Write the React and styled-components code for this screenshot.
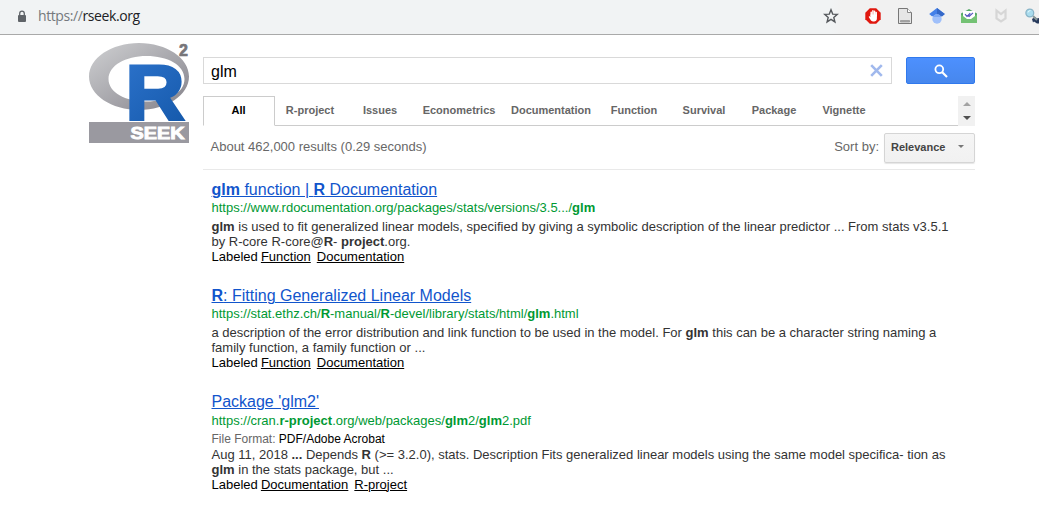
import React from "react";
import styled, { createGlobalStyle } from "styled-components";

const Global = createGlobalStyle`
  * { box-sizing: border-box; }
  body { margin: 0; background: #fff; overflow: hidden; font-family: "Liberation Sans", Arial, sans-serif; }
`;

const Toolbar = styled.header`
  display: flex;
  align-items: center;
  height: 35px;
  padding-left: 17px;
  padding-bottom: 2px;
  background: linear-gradient(90deg, #f1f3f4 80%, #f1f1f1 81%);
  border-bottom: 1px solid #a9a9a9;
  overflow: hidden;
  > svg { flex: none; }
`;

const Address = styled.div`
  flex: none;
  width: 785px;
  margin-left: 11px;
  font: 14px/18px "Open Sans", "Noto Sans", sans-serif;
  letter-spacing: -0.41px;
  color: #202124;
  span { color: #75797d; }
`;

const Extensions = styled.div`
  display: flex;
  flex: none;
  align-items: center;
  gap: 16px;
  svg { flex: none; display: block; }
  svg:first-child { margin-right: 10px; }
`;

const Page = styled.main`
  display: flex;
  padding: 8px 0 0 89px;
`;

const LogoLink = styled.div`
  width: 114px;
  flex: none;
  svg { display: block; overflow: visible; }
`;

const Content = styled.div`
  width: 772px;
  padding-top: 14px;
`;

const SearchRow = styled.form`
  display: flex;
  gap: 14px;
`;

const SearchField = styled.div`
  display: flex;
  align-items: center;
  justify-content: space-between;
  width: 689px;
  height: 27px;
  padding: 0 8px 0 7px;
  border: 1px solid #d9d9d9;
  font-size: 16px;
  color: #000;
  span { padding-top: 2px; }
`;

const SearchButton = styled.button`
  display: flex;
  align-items: center;
  justify-content: center;
  width: 69px;
  height: 27px;
  padding: 0;
  border: 1px solid #3079ed;
  border-radius: 2px;
  background: linear-gradient(#4d90fe, #4787ed);
`;

const TabBar = styled.nav`
  display: flex;
  height: 30px;
  margin-top: 12px;
  border-bottom: 1px solid #ccc;
`;

const Tab = styled.div`
  width: ${(p) => p.$width}px;
  height: 30px;
  padding: ${(p) => (p.$active ? "7px 1px 0 0" : "8px 0 0")};
  border: ${(p) => (p.$active ? "1px solid #ccc" : "0")};
  border-bottom: ${(p) => (p.$active ? "1px solid #fff" : "0")};
  text-align: center;
  font-weight: bold;
  font-size: 11px;
  line-height: 13px;
  color: ${(p) => (p.$active ? "#000" : "#666")};
`;

const TabScroller = styled.div`
  display: flex;
  flex-direction: column;
  align-items: center;
  justify-content: space-between;
  width: 17px;
  height: 30px;
  margin-left: auto;
  padding: 6px 0;
  background: #f1f1f1;
`;

const Summary = styled.div`
  display: flex;
  align-items: center;
  height: 44px;
  padding-left: 7.5px;
  border-bottom: 1px solid #e9e9e9;
  font-size: 13px;
  color: #676767;
`;

const ResultCount = styled.span`
  flex: 1;
  padding-bottom: 2px;
`;

const SortLabel = styled.span`
  margin-right: 5px;
  padding-bottom: 2px;
`;

const SortSelect = styled.div`
  display: flex;
  align-items: center;
  justify-content: space-between;
  width: 91px;
  height: 30px;
  padding: 0 10px 2px 6px;
  border: 1px solid #d5d5d5;
  border-radius: 2px;
  background: linear-gradient(#f5f5f5, #f1f1f1);
  box-shadow: 0 1px 1px rgba(0, 0, 0, 0.1);
  font-weight: bold;
  font-size: 11px;
  color: #444;
`;

const Result = styled.article`
  height: 106px;
  padding-left: 8.5px;
  white-space: nowrap;
  &:first-of-type { margin-top: 10px; }
`;

const Title = styled.h2`
  margin: 0;
  font-weight: normal;
  font-size: 16px;
  line-height: 20px;
  text-decoration: underline;
  text-decoration-thickness: 1px;
  color: #15c;
`;

const Line = styled.div`
  font-size: 13px;
  line-height: 15px;
  color: ${(p) => p.$color || "#333"};
`;

const Url = styled(Line)`
  line-height: 16px;
  margin-bottom: 3px;
  padding-top: ${(p) => (p.$lowered ? 1 : 0)}px;
  color: #093;
`;

const Format = styled(Line)`
  margin-top: -1px;
  font-size: 12px;
  line-height: 16px;
  span { color: #666; }
`;

const LabelLine = styled(Line)`
  word-spacing: -0.5px;
`;

const Label = styled.span`
  margin-right: 6px;
  text-decoration: underline;
  text-decoration-thickness: 1px;
`;

const tabs = [
  ["All", 72], ["R-project", 70], ["Issues", 70], ["Econometrics", 88], ["Documentation", 96],
  ["Function", 70], ["Survival", 70], ["Package", 70], ["Vignette", 70],
];

const Lock = () => (
  <svg width="10" height="13" viewBox="0 0 10 13">
    <rect x="1" y="5" width="8" height="7" rx="1" fill="#5f6368" />
    <path d="M2.7 5V3.5a2.3 2.3 0 0 1 4.6 0V5" fill="none" stroke="#5f6368" strokeWidth="1.3" />
  </svg>
);

const Star = () => (
  <svg width="16" height="16" viewBox="0 0 16 16">
    <path d="M8 1.8l1.7 4.3 4.6.3-3.5 3 1.1 4.5L8 11.4l-3.9 2.5 1.1-4.5-3.5-3 4.6-.3z" fill="none" stroke="#55585c" strokeWidth="1.4" />
  </svg>
);

const Blocker = () => (
  <svg width="16" height="16" viewBox="0 0 16 16">
    <path d="M4.8.3h6.4l4.5 4.5v6.4l-4.5 4.5H4.8L.3 11.2V4.8z" fill="#e0180f" />
    <path d="M6.200 8V4.300M7.900 7.500V2.800M9.600 7.500V3.200M11.200 8V4.500" stroke="#fff" strokeWidth="1.500" strokeLinecap="round" />
    <path d="M5.500 6.500h6.400v4.200c0 1.500-1.200 2.800-2.800 2.800H8c-1 0-1.700-.5-2.200-1.200L3.900 9.300c-.5-.8.7-1.500 1.600-.4z" fill="#fff" />
  </svg>
);

const PageIcon = () => (
  <svg width="16" height="16" viewBox="0 0 16 16">
    <path d="M1.500.5h9l4 4v11h-13z" fill="#e6e6e6" stroke="#777" />
    <path d="M10.500.5v4h4" fill="#fff" stroke="#888" />
    <path d="M3.500 12.500h9v1.500h-9z" fill="#aaa" stroke="#888" strokeWidth=".6" />
  </svg>
);

const Scholar = () => (
  <svg width="16" height="16" viewBox="0 0 16 16">
    <path d="M8 0l7.800 6.100-2.600 2.100H2.800L.2 6.100z" fill="#4480e8" />
    <path d="M8 0l7.800 6.100-2.600 2.100H8z" fill="#3468c8" />
    <circle cx="8" cy="11" r="4.700" fill="#a0c0fa" />
    <path d="M3.800 9a4.800 4.800 0 0 1 8.400 0z" fill="#7ca8f4" />
  </svg>
);

const MailCheck = () => (
  <svg width="16" height="16" viewBox="0 0 16 16">
    <path d="M0 5.500L8 1l8 4.500V14q0 1-1 1H1q-1 0-1-1z" fill="#55a968" />
    <path d="M2 3h12v7l-6 3-6-3z" fill="#fff" />
    <path d="M0 6.500l6 4.500h4l6-4.500V14q0 1-1 1H1q-1 0-1-1z" fill="#74c274" />
    <path d="M4 6.200l2 2.200 3.300-3.200M7.300 7.800l.8.7L12 4.900" fill="none" stroke="#5655bd" strokeWidth="1.200" />
  </svg>
);

const Shield = () => (
  <svg width="16" height="16" viewBox="0 0 16 16">
    <path d="M3.500 10.500V2.500L8 6l4.500-3.500v8L8 13.500z" fill="none" stroke="#d6d6d6" strokeWidth="2.200" />
  </svg>
);

const Lens = () => (
  <svg width="16" height="16" viewBox="0 0 16 16">
    <path d="M7 11l3-2 2 1.500 4-1v6h-4l-3-2-1 1z" fill="#27395c" />
    <path d="M8 8l4 4" stroke="#899" strokeWidth="2" />
    <circle cx="4.800" cy="5" r="3.900" fill="#a9dcee" stroke="#8ab5c8" strokeWidth="1.300" />
    <path d="M3 4.500q.5-2 2.500-2" fill="none" stroke="#e4f7fc" />
  </svg>
);

const Logo = () => (
  <svg width="101" height="101" viewBox="0 0 101 101">
    <defs>
      <linearGradient id="ring" x1="0" y1="0" x2="1" y2="1">
        <stop offset="0" stopColor="#cfd0d2" />
        <stop offset="1" stopColor="#84828a" />
      </linearGradient>
      <linearGradient id="letter" gradientUnits="userSpaceOnUse" x1="41" y1="21" x2="96" y2="77">
        <stop offset="0" stopColor="#2a70c8" />
        <stop offset="1" stopColor="#165aac" />
      </linearGradient>
    </defs>
    <path fillRule="evenodd" fill="url(#ring)" d="M50 0c27.600 0 50 15 50 33.500S77.600 67 50 67 0 52 0 33.500 22.400 0 50 0zM57.500 13C36.500 13 19.500 22.600 19.500 36S36.500 58.500 57.500 58.500 95.500 50 95.500 36 78.500 13 57.500 13z" />
    <text x="36.500" y="75.500" fontFamily="Liberation Sans" fontWeight="bold" fontSize="77" textLength="59" lengthAdjust="spacingAndGlyphs" fill="url(#letter)" stroke="url(#letter)" strokeWidth="3">R</text>
    <text x="90" y="12.500" fontFamily="Liberation Sans" fontWeight="bold" fontSize="16" fill="#77767a" stroke="#77767a" strokeWidth=".7">2</text>
    <rect y="79" width="100" height="21" fill="#9a99a0" />
    <text x="41.500" y="95.500" fontFamily="Liberation Sans" fontWeight="bold" fontSize="17" textLength="54" lengthAdjust="spacingAndGlyphs" fill="#fff" stroke="#fff" strokeWidth=".9">SEEK</text>
  </svg>
);

const Triangle = ({ up, color, size = 8 }) => (
  <svg width={size} height={size / 2} viewBox="0 0 8 4">
    <path d={up ? "M0 4L4 0l4 4z" : "M0 0h8L4 4z"} fill={color} />
  </svg>
);

const Labels = ({ items }) => (
  <LabelLine $color="#000">
    Labeled {items.map((item) => <Label key={item}>{item}</Label>)}
  </LabelLine>
);

export default function App() {
  return (
    <>
      <Global />
      <Toolbar>
        <Lock />
        <Address><span>https://</span>rseek.org</Address>
        <Extensions>
          <Star /><Blocker /><PageIcon /><Scholar /><MailCheck /><Shield /><Lens />
        </Extensions>
      </Toolbar>
      <Page>
        <LogoLink><Logo /></LogoLink>
        <Content>
          <SearchRow>
            <SearchField>
              <span>glm</span>
              <svg width="13" height="13" viewBox="0 0 13 13">
                <path d="M1.200 1.200l10.600 10.600M11.800 1.200L1.200 11.800" stroke="#a1b9ed" strokeWidth="2.600" />
              </svg>
            </SearchField>
            <SearchButton type="button" aria-label="Search">
              <svg width="14" height="14" viewBox="0 0 14 14">
                <circle cx="5.300" cy="5.300" r="3.900" fill="none" stroke="#fff" strokeWidth="1.800" />
                <path d="M8 8l5 5" stroke="#fff" strokeWidth="2.100" />
              </svg>
            </SearchButton>
          </SearchRow>
          <TabBar>
            {tabs.map(([name, width], i) => (
              <Tab key={name} $width={width} $active={i === 0}>{name}</Tab>
            ))}
            <TabScroller>
              <Triangle up color="#a3a3a3" />
              <Triangle color="#505050" />
            </TabScroller>
          </TabBar>
          <Summary>
            <ResultCount>About 462,000 results (0.29 seconds)</ResultCount>
            <SortLabel>Sort by:</SortLabel>
            <SortSelect>Relevance <Triangle color="#777" size={6} /></SortSelect>
          </Summary>

          <Result>
            <Title><b>glm</b> function | <b>R</b> Documentation</Title>
            <Url>https://www.rdocumentation.org/packages/stats/versions/3.5.../<b>glm</b></Url>
            <Line><b>glm</b> is used to fit generalized linear models, specified by giving a symbolic description of the linear predictor ... From stats v3.5.1</Line>
            <Line>by R-core R-core@<b>R</b>- <b>project</b>.org.</Line>
            <Labels items={["Function", "Documentation"]} />
          </Result>
          <Result>
            <Title><b>R</b>: Fitting Generalized Linear Models</Title>
            <Url>https://stat.ethz.ch/<b>R</b>-manual/<b>R</b>-devel/library/stats/html/<b>glm</b>.html</Url>
            <Line>a description of the error distribution and link function to be used in the model. For <b>glm</b> this can be a character string naming a</Line>
            <Line>family function, a family function or ...</Line>
            <Labels items={["Function", "Documentation"]} />
          </Result>
          <Result>
            <Title>Package 'glm2'</Title>
            <Url $lowered>https://cran.<b>r-project</b>.org/web/packages/<b>glm</b>2/<b>glm</b>2.pdf</Url>
            <Format $color="#000"><span>File Format:</span> PDF/Adobe Acrobat</Format>
            <Line>Aug 11, 2018 <b>...</b> Depends <b>R</b> (&gt;= 3.2.0), stats. Description Fits generalized linear models using the same model specifica- tion as</Line>
            <Line><b>glm</b> in the stats package, but ...</Line>
            <Labels items={["Documentation", "R-project"]} />
          </Result>
        </Content>
      </Page>
    </>
  );
}
